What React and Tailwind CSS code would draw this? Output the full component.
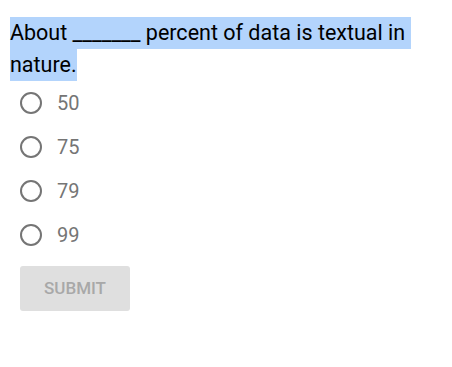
import React from "react";

const options = ["50", "75", "79", "99"];

const App = () => {
  return (
    <div className="pt-[17px] pl-[10px] font-['Roboto',sans-serif]">
      {/* Question, shown as selected text */}
      <div className="text-[21.5px] leading-[32px] text-black">
        <div className="w-fit h-[32px] bg-[#b3d4fc] pr-[6px]">
          About _______ percent of data is textual in
        </div>
        <div className="w-fit h-[32px] bg-[#b3d4fc]">nature.</div>
      </div>

      {/* Options */}
      <div className="flex flex-col pl-[10px]">
        {options.map((opt) => (
          <label key={opt} className="flex items-center h-[44px] gap-[15px] cursor-pointer">
            <span className="w-[22px] h-[22px] rounded-full border-2 border-[#757575]" />
            <span className="text-[20px] text-[#757575]">{opt}</span>
          </label>
        ))}
      </div>

      <button
        disabled
        className="ml-[10px] mt-[9px] w-[110px] h-[45px] rounded-[3px] bg-[#dfdfdf] text-[17px] font-medium text-[#a8a8a8]"
      >
        SUBMIT
      </button>
    </div>
  );
};

export default App;
